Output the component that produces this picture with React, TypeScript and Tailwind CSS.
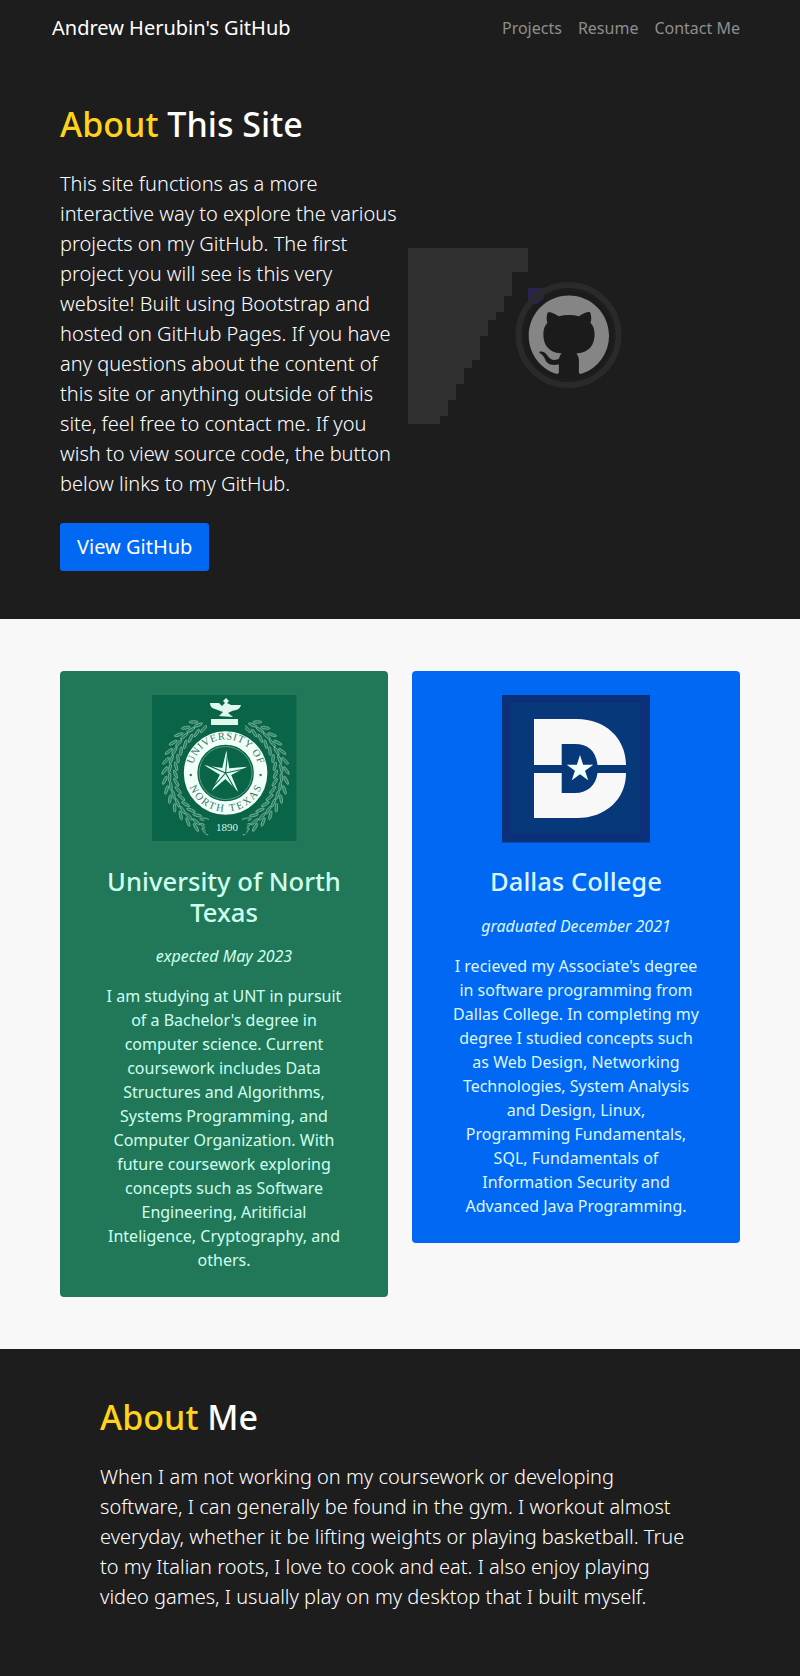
import React from "react";

function starPoints(cx: number, cy: number, outer: number, inner: number, turn = 0): string {
  return Array.from({ length: 10 }, (_, i) => {
    const r = i % 2 === 0 ? outer : inner;
    const a = ((i * 36 - 90 + turn) * Math.PI) / 180;
    return `${(cx + r * Math.cos(a)).toFixed(2)},${(cy + r * Math.sin(a)).toFixed(2)}`;
  }).join(" ");
}

function GithubBanner() {
  return (
    <svg viewBox="0 0 340 192" className="mb-2 w-[340px] h-[192px] shrink-0" aria-hidden="true">
      <path
        d="M8 11H128V35H112V59H104V75H96V83H88V99H80V123H72V131H64V147H56V163H48V179H40V187H8Z"
        fill="#303030"
      />
      <rect x="128" y="51" width="16" height="16" fill="#29234e" />
      <circle cx="168.5" cy="98" r="50" fill="none" stroke="#2a2a2a" strokeWidth="6" />
      <circle cx="168.5" cy="98" r="44" fill="#1b1b1b" />
      <g transform="translate(128.7 58.6) scale(5.02)">
        <path
          fill="#858585"
          d="M8 0C3.58 0 0 3.58 0 8c0 3.54 2.29 6.53 5.47 7.59.4.07.55-.17.55-.38 0-.19-.01-.82-.01-1.49-2.01.37-2.53-.49-2.69-.94-.09-.23-.48-.94-.82-1.13-.28-.15-.68-.52-.01-.53.63-.01 1.08.58 1.23.82.72 1.21 1.87.87 2.33.66.07-.52.28-.87.51-1.07-1.78-.2-3.64-.89-3.64-3.95 0-.87.31-1.59.82-2.15-.08-.2-.36-1.02.08-2.12 0 0 .67-.21 2.2.82.64-.18 1.32-.27 2-.27s1.36.09 2 .27c1.53-1.04 2.2-.82 2.2-.82.44 1.1.16 1.92.08 2.12.51.56.82 1.27.82 2.15 0 3.07-1.87 3.75-3.65 3.95.29.25.54.73.54 1.48 0 1.07-.01 1.93-.01 2.2 0 .21.15.46.55.38A8.01 8.01 0 0 0 16 8c0-4.42-3.58-8-8-8z"
        />
      </g>
    </svg>
  );
}

function WreathLeaves() {
  const leaves: React.ReactElement[] = [];
  for (let i = 0; i < 15; i++) {
    const t = 26 + i * 9.2;
    for (const side of [-1, 1]) {
      for (const [r, tilt] of [[50, 22], [56, -4], [61, -26]]) {
        const a = ((t + (r - 50) * 0.5 - 90) * Math.PI) / 180;
        const x = 75.5 + side * r * Math.cos(a);
        const y = 79 + r * Math.sin(a);
        leaves.push(
          <ellipse
            key={`${i}-${side}-${r}`}
            cx={x}
            cy={y}
            rx="1.3"
            ry="4.6"
            transform={`rotate(${side * (t + tilt - 90)} ${x} ${y})`}
            fill="#2c7d60"
            stroke="#79b79d"
            strokeWidth="0.8"
          />,
        );
      }
    }
  }
  return <g>{leaves}</g>;
}

function UntSeal() {
  return (
    <svg viewBox="0 0 148 148" className="size-[148px]" role="img">
      <defs>
        <path id="sealTop" d="M42 78a33.6 33.6 0 0 1 67.2 0" />
        <path id="sealBottom" d="M37 78a38.6 38.6 0 0 0 77.2 0" />
      </defs>
      <rect x="2" width="144.5" height="146" fill="#0a6447" />
      <WreathLeaves />
      <path d="M57 4h38v40H57z" fill="#0a6447" />
      <path
        fill="#dff8ec"
        d="M61 24h27v6H61zM69 21l4-4-8-3c-4-1-5-4-5-6h9l3 3 3-3-2-2 3-3 3 3-2 2 4 2h10c-1 4-4 5-9 6l-4 2 5 4z"
      />
      <circle cx="75.6" cy="78" r="43.5" fill="#0a6447" />
      <circle cx="75.6" cy="78" r="35" fill="none" stroke="#f1fff8" strokeWidth="13.5" />
      <circle cx="75.6" cy="78" r="26.5" fill="none" stroke="#55a184" strokeWidth="1" />
      <polygon points={starPoints(75.6, 78, 22.5, 6, 2)} fill="#e2fff3" />
      <g stroke="#0a6447" strokeWidth="1.1">
        {[2, 74, 146, 218, 290].map((deg) => (
          <path key={deg} d="M75.6 78l1.2-19" transform={`rotate(${deg} 75.6 78)`} />
        ))}
      </g>
      <g fontFamily="Liberation Serif, serif" fontSize="10.5" fill="#35775f" textAnchor="middle">
        <text textLength="88">
          <textPath href="#sealTop" startOffset="50%">UNIVERSITY OF</textPath>
        </text>
        <text textLength="92">
          <textPath href="#sealBottom" startOffset="50%">NORTH TEXAS</textPath>
        </text>
      </g>
      <circle cx="40.8" cy="80" r="1.2" fill="#35775f" />
      <circle cx="110.6" cy="80" r="1.2" fill="#35775f" />
      <path d="M54 124q22 7 44 0l-2 15H56z" fill="#0a6447" />
      <text x="77" y="136" fontSize="11" fontFamily="Liberation Serif, serif" fill="#d5f5e7" textAnchor="middle">
        1890
      </text>
    </svg>
  );
}

function DallasLogo() {
  return (
    <svg viewBox="0 0 148 148" className="size-[148px]" role="img">
      <rect width="148" height="147.5" fill="#0c3077" />
      <rect x="9" y="8" width="129" height="131" fill="#06387a" />
      <path
        fill="#f8f8f8"
        fillRule="evenodd"
        d="M32 24H75C104 24 124 44 124 70H95.5C94 56 86 49 73 49H59.7V70H32ZM32 78H59.7V98H73C86 98 94 90 95.5 78H124C124 104 104 123 75 123H32Z"
      />
      <polygon points={starPoints(78, 74, 14, 5.3)} fill="#f2ffff" />
    </svg>
  );
}

export default function App() {
  return (
    <div className="min-h-[1676px] bg-[#1d1d1d] font-['Noto_Sans','Liberation_Sans',sans-serif] text-base text-white">
      <nav className="flex h-14 items-center justify-between pr-[60px] pl-[52px]">
        <a className="text-xl leading-[30px]">Andrew Herubin&apos;s GitHub</a>
        <div className="flex gap-4 text-[#8e8e8e]">
          <a>Projects</a>
          <a>Resume</a>
          <a>Contact Me</a>
        </div>
      </nav>

      <section className="flex h-[562.8px] items-center justify-between px-[60px]">
        <div className="w-[340px] shrink-0">
          <h1 className="text-[34px] leading-[1.2] font-medium">
            <span className="text-[#ffd21c]">About</span> This Site
          </h1>
          <p className="my-6 text-xl leading-[30px] font-light">
            This site functions as a more interactive way to explore the various projects on my
            GitHub. The first project you will see is this very website! Built using Bootstrap and
            hosted on GitHub Pages. If you have any questions about the content of this site or
            anything outside of this site, feel free to contact me. If you wish to view source
            code, the button below links to my GitHub.
          </p>
          <button className="block h-12 rounded-[3px] bg-[#0068f3] px-[17px] text-xl leading-[30px]">
            View GitHub
          </button>
        </div>
        <GithubBanner />
      </section>

      <section className="flex h-[730px] items-start gap-6 bg-[#f8f8f8] px-[60px] pt-[52.2px]">
        <article className="flex w-[328px] flex-col items-center rounded-[4px] bg-[#207859] px-[41px] pt-6 pb-[25px] text-center text-[#cffff0]">
          <UntSeal />
          <h3 className="mt-6 text-[25.6px] leading-[1.2] font-medium">University of North Texas</h3>
          <p className="mt-4 italic">expected May 2023</p>
          <p className="mt-4">
            I am studying at UNT in pursuit of a Bachelor&apos;s degree in computer science. Current
            coursework includes Data Structures and Algorithms, Systems Programming, and Computer
            Organization. With future coursework exploring concepts such as Software Engineering,
            Aritificial Inteligence, Cryptography, and others.
          </p>
        </article>
        <article className="flex w-[328px] flex-col items-center rounded-[4px] bg-[#0068f3] px-[41px] pt-6 pb-[25px] text-center text-[#dcf6ff]">
          <DallasLogo />
          <h3 className="mt-6 text-[25.6px] leading-[1.2] font-medium">Dallas College</h3>
          <p className="mt-4 italic">graduated December 2021</p>
          <p className="mt-4">
            I recieved my Associate&apos;s degree in software programming from Dallas College. In
            completing my degree I studied concepts such as Web Design, Networking Technologies,
            System Analysis and Design, Linux, Programming Fundamentals, SQL, Fundamentals of
            Information Security and Advanced Java Programming.
          </p>
        </article>
      </section>

      <section className="px-[100px] pt-12">
        <h1 className="text-[34px] leading-[1.2] font-medium">
          <span className="text-[#ffd21c]">About</span> Me
        </h1>
        <p className="mt-6 text-xl leading-[30px] font-light">
          When I am not working on my coursework or developing software, I can generally be found
          in the gym. I workout almost everyday, whether it be lifting weights or playing
          basketball. True to my Italian roots, I love to cook and eat. I also enjoy playing video
          games, I usually play on my desktop that I built myself.
        </p>
      </section>
    </div>
  );
}
